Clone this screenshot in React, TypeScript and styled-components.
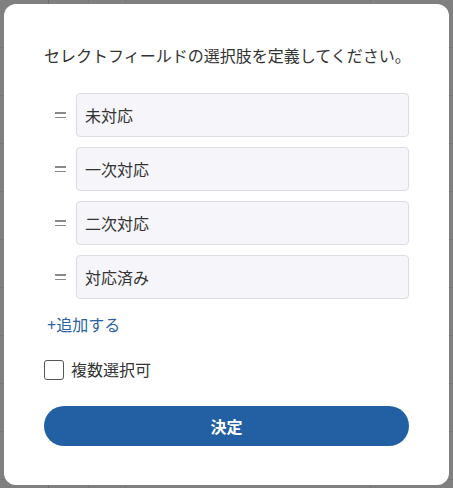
import styled, { createGlobalStyle } from 'styled-components';

const GlobalStyle = createGlobalStyle`
  html, body {
    margin: 0;
    padding: 0;
  }
  body {
    font-family: "Noto Sans", "Noto Sans CJK JP", sans-serif;
    color: #333;
  }
  * {
    box-sizing: border-box;
  }
`;

// #region styled
const Backdrop = styled.div`
  width: 453px;
  height: 488px;
  padding: 4px 4px 3px 4px;
  background-color: #808080;
  background-image:
    linear-gradient(to right, transparent 48px, #6e6e6e 48px, #6e6e6e 49px, transparent 49px),
    linear-gradient(to right, transparent 88px, #777 88px, #777 89px, transparent 89px),
    linear-gradient(to right, transparent 125px, #777 125px, #777 126px, transparent 126px),
    linear-gradient(to right, transparent 370px, #777 370px, #777 371px, transparent 371px),
    repeating-linear-gradient(to bottom, transparent 0, transparent 47px, #777 47px, #777 48px);
`;

const Modal = styled.div`
  width: 445px;
  height: 481px;
  background: #fff;
  border-radius: 12px;
  padding: 40px 40px 38px;
  display: flex;
  flex-direction: column;

  & > * {
    flex-shrink: 0;
  }
`;

const Title = styled.p`
  margin: 0;
  font-size: 16px;
  line-height: 24px;
  white-space: nowrap;
  color: #333;
`;

const OptionList = styled.ul`
  list-style: none;
  margin: 25px 0 0;
  padding: 0;
  display: flex;
  flex-direction: column;
  gap: 10px;
`;

const OptionRow = styled.li`
  display: flex;
  align-items: center;
`;

const Handle = styled.span`
  width: 32px;
  display: flex;
  flex-direction: column;
  align-items: center;
  gap: 3px;
  cursor: grab;

  &::before,
  &::after {
    content: '';
    display: block;
    width: 11px;
    height: 1.5px;
    background: #8a8a8a;
  }
`;

const OptionInput = styled.input`
  flex: 1;
  height: 44px;
  padding: 0 8px;
  border: 1px solid #dcdce2;
  border-radius: 4px;
  background: #f5f5fa;
  font-family: inherit;
  font-size: 16px;
  color: #333;
  outline: none;
`;

const AddLink = styled.button`
  align-self: flex-start;
  margin-top: 14px;
  padding: 0 0 0 3px;
  border: none;
  background: none;
  font-family: inherit;
  font-size: 16px;
  line-height: 24px;
  color: #2a62a4;
  cursor: pointer;
`;

const CheckRow = styled.label`
  margin-top: 23px;
  display: flex;
  align-items: center;
  gap: 7px;
  font-size: 16px;
  line-height: 20px;
  color: #333;
`;

const Box = styled.span`
  width: 20px;
  height: 20px;
  border: 1.5px solid #555;
  border-radius: 3px;
  background: #fff;
`;

const SubmitButton = styled.button`
  margin-top: 26px;
  height: 40px;
  border: none;
  border-radius: 20px;
  background: #2360a3;
  color: #fff;
  font-family: inherit;
  font-size: 16px;
  font-weight: 700;
  cursor: pointer;
`;
// #endregion

const options = ['未対応', '一次対応', '二次対応', '対応済み'];

const App = () => (
  <>
    <GlobalStyle />
    <Backdrop>
      <Modal>
        <Title>セレクトフィールドの選択肢を定義してください。</Title>
        <OptionList>
          {options.map(option => (
            <OptionRow key={option}>
              <Handle />
              <OptionInput defaultValue={option} />
            </OptionRow>
          ))}
        </OptionList>
        <AddLink>+追加する</AddLink>
        <CheckRow>
          <Box />
          複数選択可
        </CheckRow>
        <SubmitButton>決定</SubmitButton>
      </Modal>
    </Backdrop>
  </>
);

export default App;
